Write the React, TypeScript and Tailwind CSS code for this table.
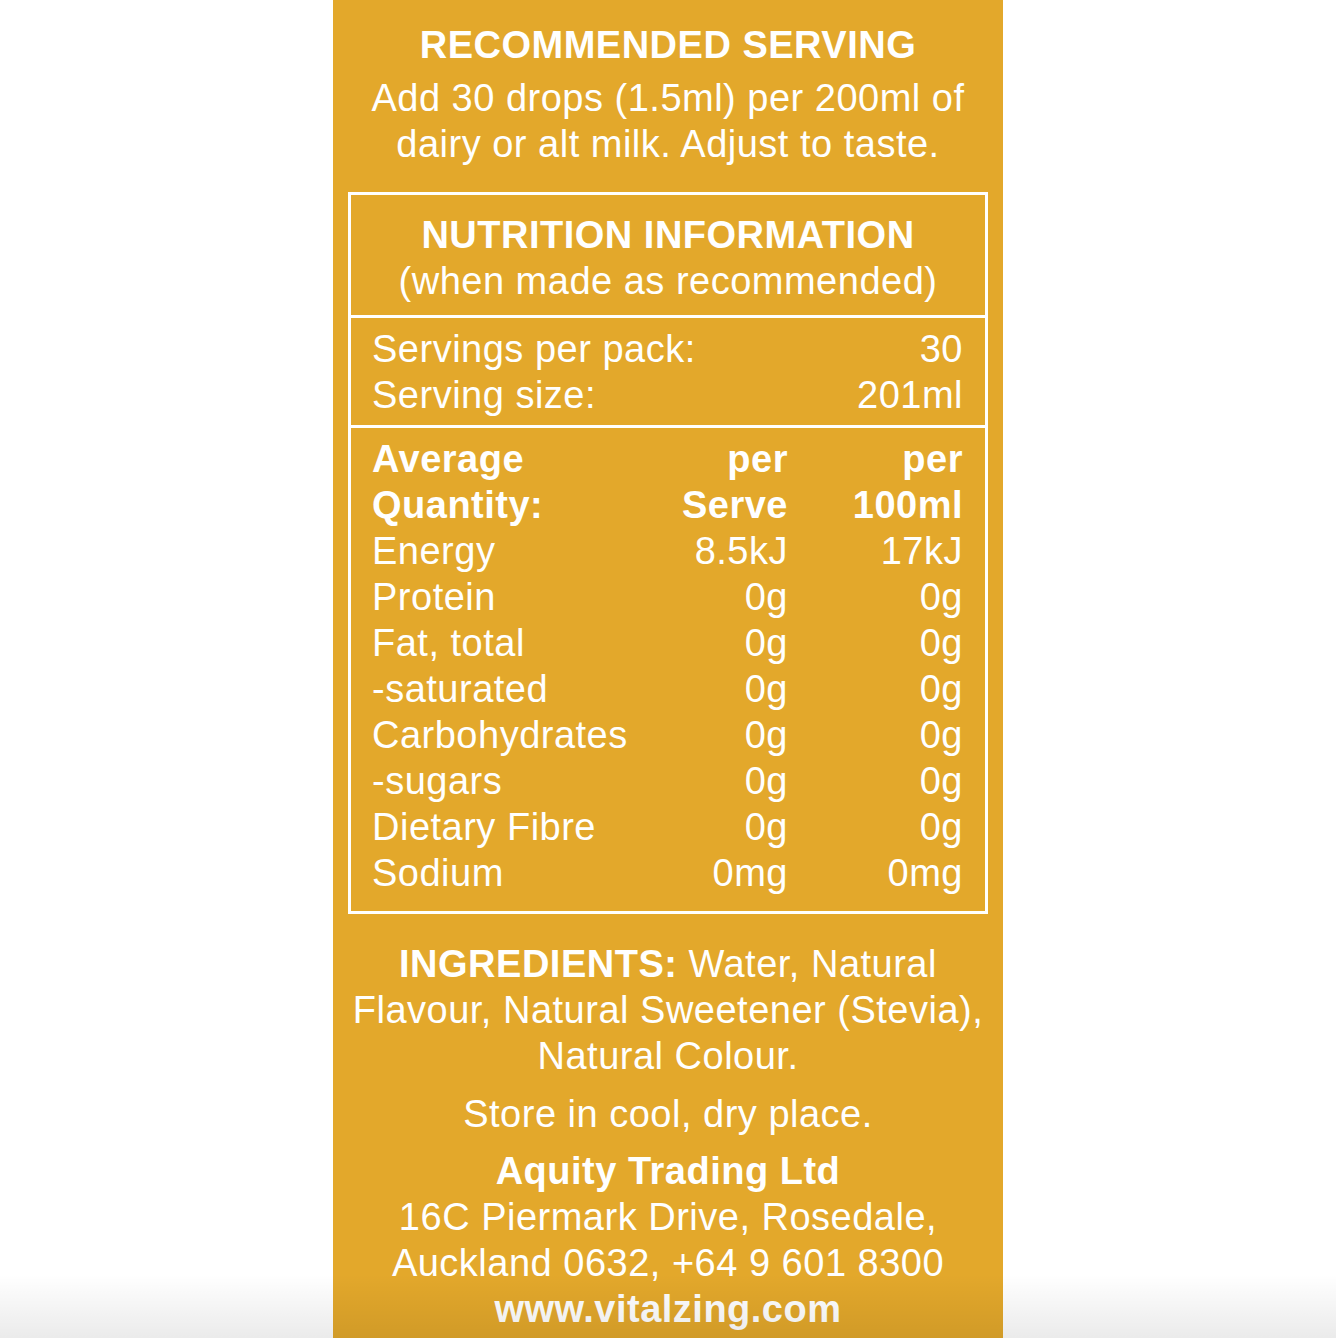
const rows = [
  { name: 'Energy', serve: '8.5kJ', per100: '17kJ' },
  { name: 'Protein', serve: '0g', per100: '0g' },
  { name: 'Fat, total', serve: '0g', per100: '0g' },
  { name: '-saturated', serve: '0g', per100: '0g' },
  { name: 'Carbohydrates', serve: '0g', per100: '0g' },
  { name: '-sugars', serve: '0g', per100: '0g' },
  { name: 'Dietary Fibre', serve: '0g', per100: '0g' },
  { name: 'Sodium', serve: '0mg', per100: '0mg' },
]

export default function App() {
  return (
    <div className="relative flex h-[1338px] w-full justify-center overflow-hidden bg-white font-['Liberation_Sans',Arial,sans-serif]">
      <div className="flex w-[670px] flex-col items-center bg-[#e3a82b] pt-[22px] text-[38px] leading-[46px] tracking-[0.5px] text-white">
        <h1 className="font-bold">RECOMMENDED SERVING</h1>
        <p className="mt-[7px] text-center">
          Add 30 drops (1.5ml) per 200ml of
          <br />
          dairy or alt milk. Adjust to taste.
        </p>

        <div className="mt-[25px] w-[640px] border-[3px] border-white">
          <div className="flex flex-col items-center border-b-[3px] border-white pt-[17px] pb-[11px]">
            <h2 className="font-bold">NUTRITION INFORMATION</h2>
            <p>(when made as recommended)</p>
          </div>

          <div className="border-b-[3px] border-white pr-[22px] pl-[21px] pt-[8px] pb-[7px]">
            <div className="flex justify-between">
              <span>Servings per pack:</span>
              <span>30</span>
            </div>
            <div className="flex justify-between">
              <span>Serving size:</span>
              <span>201ml</span>
            </div>
          </div>

          <div className="grid grid-cols-[minmax(0,1fr)_150px_175px] pr-[22px] pl-[21px] pt-[8px] pb-[15px]">
            <span className="font-bold">Average</span>
            <span className="text-right font-bold">per</span>
            <span className="text-right font-bold">per</span>
            <span className="font-bold">Quantity:</span>
            <span className="text-right font-bold">Serve</span>
            <span className="text-right font-bold">100ml</span>
            {rows.map((r) => (
              <div key={r.name} className="contents">
                <span className="whitespace-nowrap">{r.name}</span>
                <span className="text-right">{r.serve}</span>
                <span className="text-right">{r.per100}</span>
              </div>
            ))}
          </div>
        </div>

        <p className="mt-[27px] text-center">
          <span className="font-bold">INGREDIENTS:</span> Water, Natural
          <br />
          Flavour, Natural Sweetener (Stevia),
          <br />
          Natural Colour.
        </p>

        <p className="mt-[12px] text-center">Store in cool, dry place.</p>

        <div className="mt-[11px] flex flex-col items-center text-center">
          <span className="font-bold">Aquity Trading Ltd</span>
          <span>16C Piermark Drive, Rosedale,</span>
          <span>Auckland 0632, +64 9 601 8300</span>
          <span className="font-bold">www.vitalzing.com</span>
        </div>
      </div>

      <div className="pointer-events-none absolute inset-x-0 bottom-0 h-[64px] bg-linear-to-b from-transparent to-black/[0.08]" />
    </div>
  )
}
